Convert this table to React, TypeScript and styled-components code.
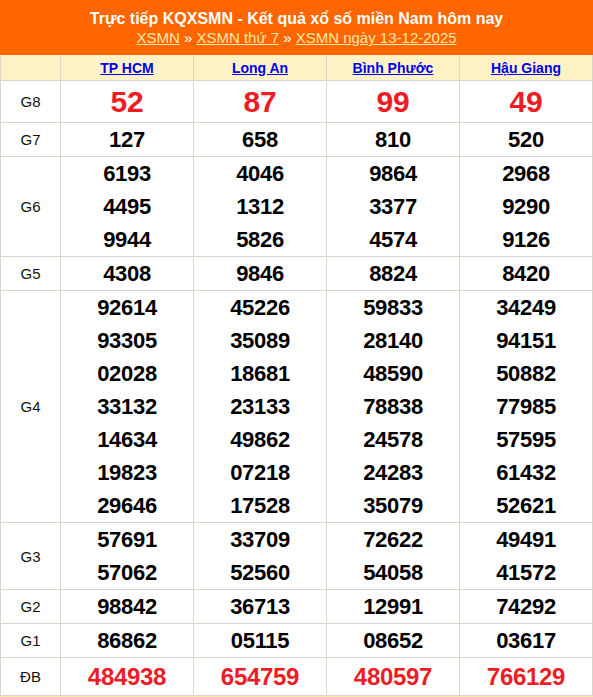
import React from "react";
import styled, { createGlobalStyle } from "styled-components";

const Global = createGlobalStyle`
  html, body { margin: 0; padding: 0; background: #fff; }
  body { font-family: "Liberation Sans", Arial, sans-serif; }
`;

const Wrap = styled.div`
  width: 593px;
  border-bottom: 2px solid #fbe6a8;
`;

const Banner = styled.div`
  background: #ff6600;
  height: 55px;
  box-sizing: border-box;
  padding-top: 9px;
  text-align: center;
  color: #fff;
`;

const Title = styled.h1`
  margin: 0;
  font-size: 16px;
  font-weight: bold;
  line-height: 19px;
`;

const Crumbs = styled.div`
  font-size: 15px;
  line-height: 19px;
  color: #fff;
`;

const Crumb = styled.a`
  color: #ffe9a6;
  text-decoration: underline;
`;

const Table = styled.table`
  width: 593px;
  border-collapse: collapse;
  table-layout: fixed;
`;

const HeadCell = styled.th`
  background: #fff3c6;
  border: 1px solid #dcd4ca;
  border-top: none;
  height: 25px;
  padding: 0;
  font-size: 14px;
  font-weight: bold;
  text-align: center;
`;

const Province = styled.a`
  color: #0000ee;
  text-decoration: underline;
`;

const Label = styled.td`
  border: 1px solid #dcd4ca;
  text-align: center;
  font-size: 15px;
  color: #111;
  padding: 0;
`;

const Cell = styled.td`
  border: 1px solid #dcd4ca;
  text-align: center;
  padding: 0;
`;

const Num = styled.div<{ $kind: "big" | "special" | "normal" }>`
  font-weight: bold;
  color: ${(p) => (p.$kind === "normal" ? "#000" : "#ee1c25")};
  font-size: ${(p) => (p.$kind === "big" ? "30px" : p.$kind === "special" ? "24px" : "22px")};
  line-height: ${(p) => (p.$kind === "big" ? "41px" : p.$kind === "special" ? "37px" : "33px")};
  letter-spacing: -0.3px;
`;

const provinces = ["TP HCM", "Long An", "Bình Phước", "Hậu Giang"];

const rows: { label: string; kind: "big" | "special" | "normal"; cols: string[][] }[] = [
  { label: "G8", kind: "big", cols: [["52"], ["87"], ["99"], ["49"]] },
  { label: "G7", kind: "normal", cols: [["127"], ["658"], ["810"], ["520"]] },
  {
    label: "G6",
    kind: "normal",
    cols: [
      ["6193", "4495", "9944"],
      ["4046", "1312", "5826"],
      ["9864", "3377", "4574"],
      ["2968", "9290", "9126"],
    ],
  },
  { label: "G5", kind: "normal", cols: [["4308"], ["9846"], ["8824"], ["8420"]] },
  {
    label: "G4",
    kind: "normal",
    cols: [
      ["92614", "93305", "02028", "33132", "14634", "19823", "29646"],
      ["45226", "35089", "18681", "23133", "49862", "07218", "17528"],
      ["59833", "28140", "48590", "78838", "24578", "24283", "35079"],
      ["34249", "94151", "50882", "77985", "57595", "61432", "52621"],
    ],
  },
  {
    label: "G3",
    kind: "normal",
    cols: [
      ["57691", "57062"],
      ["33709", "52560"],
      ["72622", "54058"],
      ["49491", "41572"],
    ],
  },
  { label: "G2", kind: "normal", cols: [["98842"], ["36713"], ["12991"], ["74292"]] },
  { label: "G1", kind: "normal", cols: [["86862"], ["05115"], ["08652"], ["03617"]] },
  { label: "ĐB", kind: "special", cols: [["484938"], ["654759"], ["480597"], ["766129"]] },
];

export default function App() {
  return (
    <>
      <Global />
      <Wrap>
        <Banner>
          <Title>Trực tiếp KQXSMN - Kết quả xổ số miền Nam hôm nay</Title>
          <Crumbs>
            <Crumb href="#">XSMN</Crumb> » <Crumb href="#">XSMN thứ 7</Crumb> »{" "}
            <Crumb href="#">XSMN ngày 13-12-2025</Crumb>
          </Crumbs>
        </Banner>
        <Table>
          <colgroup>
            <col style={{ width: 60 }} />
            <col />
            <col />
            <col />
            <col />
          </colgroup>
          <thead>
            <tr>
              <HeadCell />
              {provinces.map((p) => (
                <HeadCell key={p}>
                  <Province href="#">{p}</Province>
                </HeadCell>
              ))}
            </tr>
          </thead>
          <tbody>
            {rows.map((r) => (
              <tr key={r.label}>
                <Label>{r.label}</Label>
                {r.cols.map((c, i) => (
                  <Cell key={i}>
                    {c.map((n, j) => (
                      <Num key={j} $kind={r.kind}>
                        {n}
                      </Num>
                    ))}
                  </Cell>
                ))}
              </tr>
            ))}
          </tbody>
        </Table>
      </Wrap>
    </>
  );
}
